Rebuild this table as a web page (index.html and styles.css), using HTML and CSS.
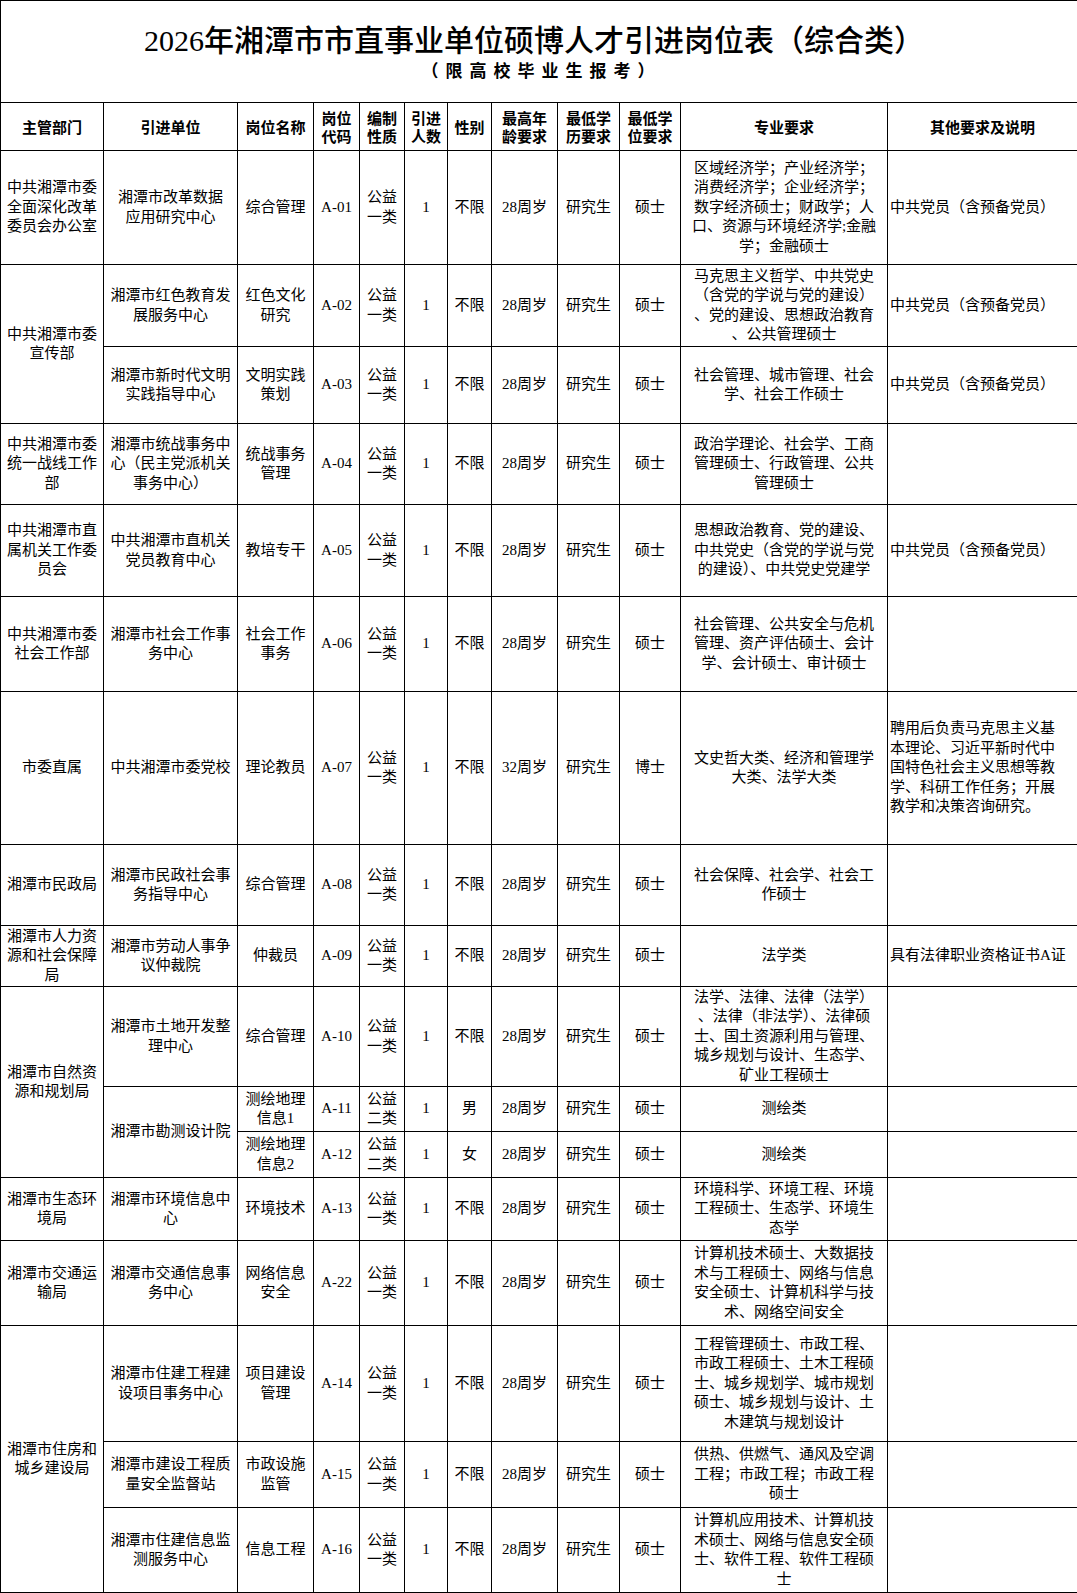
FILE: index.html
```html
<!DOCTYPE html>
<html lang="zh-CN">
<head>
<meta charset="utf-8">
<title>2026年湘潭市市直事业单位硕博人才引进岗位表（综合类）</title>
<link rel="stylesheet" href="styles.css">
</head>
<body>
<table class="sheet">
  <colgroup>
    <col class="c-dept"><col class="c-unit"><col class="c-post"><col class="c-code"><col class="c-type"><col class="c-num"><col class="c-sex"><col class="c-age"><col class="c-edu"><col class="c-deg"><col class="c-major"><col class="c-note">
  </colgroup>
  <tr class="h-title">
    <td colspan="12" class="title-cell">
      <div class="title">2026年湘潭市市直事业单位硕博人才引进岗位表（综合类）</div>
      <div class="subtitle">（限高校毕业生报考）</div>
    </td>
  </tr>
  <tr class="h-head">
    <th>主管部门</th><th>引进单位</th><th>岗位名称</th><th>岗位<br>代码</th><th>编制<br>性质</th><th>引进<br>人数</th><th>性别</th><th>最高年<br>龄要求</th><th>最低学<br>历要求</th><th>最低学<br>位要求</th><th>专业要求</th><th>其他要求及说明</th>
  </tr>
  <tr class="h114">
    <td>中共湘潭市委<br>全面深化改革<br>委员会办公室</td>
    <td>湘潭市改革数据<br>应用研究中心</td>
    <td>综合管理</td><td>A-01</td><td>公益<br>一类</td><td>1</td><td>不限</td><td>28周岁</td><td>研究生</td><td>硕士</td>
    <td>区域经济学；产业经济学；<br>消费经济学；企业经济学；<br>数字经济硕士；财政学；人<br>口、资源与环境经济学;金融<br>学；金融硕士</td>
    <td class="note">中共党员（含预备党员）</td>
  </tr>
  <tr class="h82">
    <td rowspan="2">中共湘潭市委<br>宣传部</td>
    <td>湘潭市红色教育发<br>展服务中心</td>
    <td>红色文化<br>研究</td><td>A-02</td><td>公益<br>一类</td><td>1</td><td>不限</td><td>28周岁</td><td>研究生</td><td>硕士</td>
    <td>马克思主义哲学、中共党史<br>（含党的学说与党的建设）<br>、党的建设、思想政治教育<br>、公共管理硕士</td>
    <td class="note">中共党员（含预备党员）</td>
  </tr>
  <tr class="h77">
    <td>湘潭市新时代文明<br>实践指导中心</td>
    <td>文明实践<br>策划</td><td>A-03</td><td>公益<br>一类</td><td>1</td><td>不限</td><td>28周岁</td><td>研究生</td><td>硕士</td>
    <td>社会管理、城市管理、社会<br>学、社会工作硕士</td>
    <td class="note">中共党员（含预备党员）</td>
  </tr>
  <tr class="h81">
    <td>中共湘潭市委<br>统一战线工作<br>部</td>
    <td>湘潭市统战事务中<br>心（民主党派机关<br>事务中心）</td>
    <td>统战事务<br>管理</td><td>A-04</td><td>公益<br>一类</td><td>1</td><td>不限</td><td>28周岁</td><td>研究生</td><td>硕士</td>
    <td>政治学理论、社会学、工商<br>管理硕士、行政管理、公共<br>管理硕士</td>
    <td class="note"></td>
  </tr>
  <tr class="h92">
    <td>中共湘潭市直<br>属机关工作委<br>员会</td>
    <td>中共湘潭市直机关<br>党员教育中心</td>
    <td>教培专干</td><td>A-05</td><td>公益<br>一类</td><td>1</td><td>不限</td><td>28周岁</td><td>研究生</td><td>硕士</td>
    <td>思想政治教育、党的建设、<br>中共党史（含党的学说与党<br>的建设）、中共党史党建学</td>
    <td class="note">中共党员（含预备党员）</td>
  </tr>
  <tr class="h95">
    <td>中共湘潭市委<br>社会工作部</td>
    <td>湘潭市社会工作事<br>务中心</td>
    <td>社会工作<br>事务</td><td>A-06</td><td>公益<br>一类</td><td>1</td><td>不限</td><td>28周岁</td><td>研究生</td><td>硕士</td>
    <td>社会管理、公共安全与危机<br>管理、资产评估硕士、会计<br>学、会计硕士、审计硕士</td>
    <td class="note"></td>
  </tr>
  <tr class="h153">
    <td>市委直属</td>
    <td>中共湘潭市委党校</td>
    <td>理论教员</td><td>A-07</td><td>公益<br>一类</td><td>1</td><td>不限</td><td>32周岁</td><td>研究生</td><td>博士</td>
    <td>文史哲大类、经济和管理学<br>大类、法学大类</td>
    <td class="note">聘用后负责马克思主义基<br>本理论、习近平新时代中<br>国特色社会主义思想等教<br>学、科研工作任务；开展<br>教学和决策咨询研究。</td>
  </tr>
  <tr class="h81">
    <td>湘潭市民政局</td>
    <td>湘潭市民政社会事<br>务指导中心</td>
    <td>综合管理</td><td>A-08</td><td>公益<br>一类</td><td>1</td><td>不限</td><td>28周岁</td><td>研究生</td><td>硕士</td>
    <td>社会保障、社会学、社会工<br>作硕士</td>
    <td class="note"></td>
  </tr>
  <tr class="h61">
    <td>湘潭市人力资<br>源和社会保障<br>局</td>
    <td>湘潭市劳动人事争<br>议仲裁院</td>
    <td>仲裁员</td><td>A-09</td><td>公益<br>一类</td><td>1</td><td>不限</td><td>28周岁</td><td>研究生</td><td>硕士</td>
    <td>法学类</td>
    <td class="note">具有法律职业资格证书A证</td>
  </tr>
  <tr class="h100">
    <td rowspan="3">湘潭市自然资<br>源和规划局</td>
    <td>湘潭市土地开发整<br>理中心</td>
    <td>综合管理</td><td>A-10</td><td>公益<br>一类</td><td>1</td><td>不限</td><td>28周岁</td><td>研究生</td><td>硕士</td>
    <td>法学、法律、法律（法学）<br>、法律（非法学）、法律硕<br>士、国土资源利用与管理、<br>城乡规划与设计、生态学、<br>矿业工程硕士</td>
    <td class="note"></td>
  </tr>
  <tr class="h45">
    <td rowspan="2">湘潭市勘测设计院</td>
    <td>测绘地理<br>信息1</td><td>A-11</td><td>公益<br>二类</td><td>1</td><td>男</td><td>28周岁</td><td>研究生</td><td>硕士</td>
    <td>测绘类</td>
    <td class="note"></td>
  </tr>
  <tr class="h46">
    <td>测绘地理<br>信息2</td><td>A-12</td><td>公益<br>二类</td><td>1</td><td>女</td><td>28周岁</td><td>研究生</td><td>硕士</td>
    <td>测绘类</td>
    <td class="note"></td>
  </tr>
  <tr class="h63">
    <td>湘潭市生态环<br>境局</td>
    <td>湘潭市环境信息中<br>心</td>
    <td>环境技术</td><td>A-13</td><td>公益<br>一类</td><td>1</td><td>不限</td><td>28周岁</td><td>研究生</td><td>硕士</td>
    <td>环境科学、环境工程、环境<br>工程硕士、生态学、环境生<br>态学</td>
    <td class="note"></td>
  </tr>
  <tr class="h85">
    <td>湘潭市交通运<br>输局</td>
    <td>湘潭市交通信息事<br>务中心</td>
    <td>网络信息<br>安全</td><td>A-22</td><td>公益<br>一类</td><td>1</td><td>不限</td><td>28周岁</td><td>研究生</td><td>硕士</td>
    <td>计算机技术硕士、大数据技<br>术与工程硕士、网络与信息<br>安全硕士、计算机科学与技<br>术、网络空间安全</td>
    <td class="note"></td>
  </tr>
  <tr class="h116">
    <td rowspan="3">湘潭市住房和<br>城乡建设局</td>
    <td>湘潭市住建工程建<br>设项目事务中心</td>
    <td>项目建设<br>管理</td><td>A-14</td><td>公益<br>一类</td><td>1</td><td>不限</td><td>28周岁</td><td>研究生</td><td>硕士</td>
    <td>工程管理硕士、市政工程、<br>市政工程硕士、土木工程硕<br>士、城乡规划学、城市规划<br>硕士、城乡规划与设计、土<br>木建筑与规划设计</td>
    <td class="note"></td>
  </tr>
  <tr class="h66">
    <td>湘潭市建设工程质<br>量安全监督站</td>
    <td>市政设施<br>监管</td><td>A-15</td><td>公益<br>一类</td><td>1</td><td>不限</td><td>28周岁</td><td>研究生</td><td>硕士</td>
    <td>供热、供燃气、通风及空调<br>工程；市政工程；市政工程<br>硕士</td>
    <td class="note"></td>
  </tr>
  <tr class="h85">
    <td>湘潭市住建信息监<br>测服务中心</td>
    <td>信息工程</td><td>A-16</td><td>公益<br>一类</td><td>1</td><td>不限</td><td>28周岁</td><td>研究生</td><td>硕士</td>
    <td>计算机应用技术、计算机技<br>术硕士、网络与信息安全硕<br>士、软件工程、软件工程硕<br>士</td>
    <td class="note"></td>
  </tr>
</table>
</body>
</html>
```

FILE: styles.css
```css
html, body {
  margin: 0;
  padding: 0;
  background: #fff;
}

body {
  font-family: "Liberation Serif", "Noto Sans CJK SC", serif;
  color: #000;
}

.sheet {
  width: 1077px;
  border-collapse: collapse;
  table-layout: fixed;
}

.c-dept { width: 103px; }
.c-unit { width: 134px; }
.c-post { width: 76px; }
.c-code { width: 46px; }
.c-type { width: 45px; }
.c-num { width: 43px; }
.c-sex { width: 44px; }
.c-age { width: 66px; }
.c-edu { width: 62px; }
.c-deg { width: 61px; }
.c-major { width: 207px; }
.c-note { width: 190px; }

.sheet td,
.sheet th {
  border: 1px solid #000;
  padding: 0 1px;
  text-align: center;
  vertical-align: middle;
  font-size: 15px;
  line-height: 19.5px;
  font-weight: 400;
  white-space: nowrap;
  overflow: hidden;
}

.sheet th {
  font-family: "Noto Sans CJK SC", sans-serif;
  font-weight: 700;
  line-height: 18px;
}

.sheet td.note {
  text-align: left;
  padding-left: 2px;
}

.sheet td.title-cell {
  vertical-align: top;
  padding: 0;
}

.title {
  font-family: "Liberation Serif", "Noto Sans CJK SC", serif;
  font-size: 30px;
  line-height: 34px;
  font-weight: 500;
  padding-top: 23px;
  padding-right: 10px;
}

.subtitle {
  font-family: "Noto Sans CJK SC", sans-serif;
  font-size: 17px;
  font-weight: 700;
  line-height: 22px;
  letter-spacing: 7px;
  padding-left: 5px;
  margin-top: 1px;
}

.h-title { height: 102px; }
.h-head { height: 48px; }
.h45 { height: 45px; }
.h46 { height: 46px; }
.h61 { height: 61px; }
.h63 { height: 63px; }
.h66 { height: 66px; }
.h77 { height: 77px; }
.h81 { height: 81px; }
.h82 { height: 82px; }
.h85 { height: 85px; }
.h92 { height: 92px; }
.h95 { height: 95px; }
.h100 { height: 100px; }
.h114 { height: 114px; }
.h116 { height: 116px; }
.h153 { height: 153px; }
```
